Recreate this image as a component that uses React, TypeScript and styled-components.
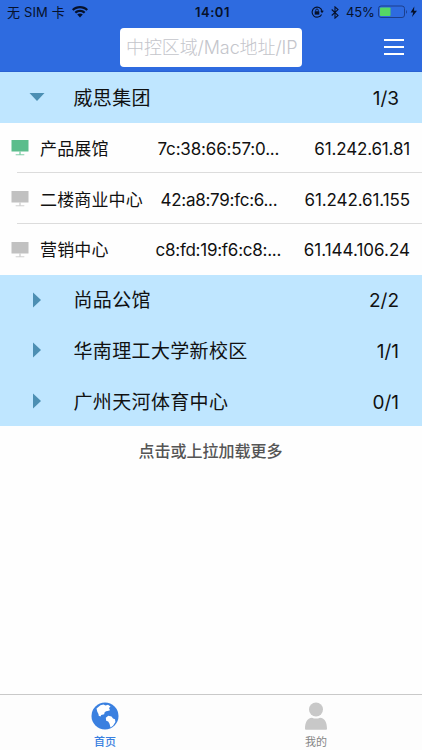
import React from "react";
import styled, { createGlobalStyle } from "styled-components";

const GlobalStyle = createGlobalStyle`
  * { box-sizing: border-box; }
  body {
    margin: 0;
    background: #fff;
    font-family: Inter, "Noto Sans CJK SC", sans-serif;
    color: #111;
  }
`;

const Screen = styled.div`
  width: 422px;
  height: 750px;
  display: flex;
  flex-direction: column;
  overflow: hidden;
  background: #fefefe;
`;

const Header = styled.header`
  height: 72px;
  flex: none;
  background: #2e6be0;
  border-bottom: 1px solid #2a62d2;
`;

const StatusBar = styled.div`
  height: 24px;
  display: grid;
  grid-template-columns: 195px 1fr 111px;
  align-items: center;
  color: #06112b;
  white-space: nowrap;
`;

const StatusGroup = styled.div`
  display: flex;
  align-items: center;
`;

const Carrier = styled.span`
  font-size: 13px;
  line-height: 22px;
  letter-spacing: 0.15px;
  margin: 0 7px 0 7px;
`;

const Clock = styled.span`
  font-size: 13px;
  font-weight: 600;
  letter-spacing: 0.5px;
`;

const StatusGap = styled.span`
  width: 7px;
`;

const Percent = styled.span`
  font-size: 13px;
  letter-spacing: -0.1px;
  margin: 0 3px 0 7px;
`;

const NavBar = styled.div`
  height: 48px;
  display: flex;
  align-items: flex-start;
  padding: 4px 18px 0 120px;
`;

const SearchField = styled.div`
  width: 182px;
  height: 39px;
  padding-left: 6px;
  border-radius: 4px;
  background: #fff;
  color: #c4c5cb;
  font-size: 18px;
  font-weight: 300;
  line-height: 40px;
  letter-spacing: -0.1px;
  white-space: nowrap;
  overflow: hidden;
`;

const MenuButton = styled.div`
  width: 20px;
  height: 16px;
  margin: 11px 0 0 auto;
  display: flex;
  flex-direction: column;
  justify-content: space-between;
`;

const MenuLine = styled.span`
  height: 2px;
  background: #fff;
`;

const GroupRow = styled.div`
  height: 50.64px;
  flex: none;
  display: grid;
  grid-template-columns: 73.5px 1fr auto;
  align-items: center;
  padding-right: 23px;
  background: #bfe6ff;
  font-size: 19px;
  line-height: 47px;
  white-space: nowrap;
`;

const GroupName = styled.span`
  padding-top: 2px;
  letter-spacing: 0.35px;
`;

const Count = styled.span`
  padding-top: 2px;
  letter-spacing: 0;
`;

const Arrow = styled.svg`
  justify-self: center;
  fill: #4c8fb3;
`;

const DeviceRow = styled.div`
  height: 50.64px;
  flex: none;
  display: grid;
  grid-template-columns: 40px 115.5px 1fr auto;
  align-items: center;
  padding-right: 12px;
  background: #fefefe;
  font-size: 17px;
  line-height: 48px;
  white-space: nowrap;
`;

const Divider = styled.div`
  height: 1px;
  margin: -1px 0 0 17px;
  flex: none;
  position: relative;
  background: #dcdcdc;
`;

const DeviceName = styled.span`
  padding-top: 2px;
  letter-spacing: 0.15px;
`;

const Mac = styled.span<{ $indent: number; $spacing: number }>`
  padding: 2px 0 0 ${(p) => p.$indent}px;
  letter-spacing: ${(p) => p.$spacing}px;
`;

const Ip = styled.span<{ $spacing: number }>`
  padding-top: 2px;
  letter-spacing: ${(p) => p.$spacing}px;
`;

const MonitorIcon = styled.svg`
  margin-left: 11px;
`;

const LoadMore = styled.div`
  padding: 12px 1px 0 0;
  text-align: center;
  color: #555;
  font-size: 16px;
  font-weight: 500;
  line-height: 26px;
`;

const TabBar = styled.nav`
  height: 56px;
  margin-top: auto;
  flex: none;
  display: grid;
  grid-template-columns: 1fr 1fr;
  border-top: 1px solid #c9c9c9;
  background: #fdfdfd;
`;

const Tab = styled.div<{ $active?: boolean }>`
  display: flex;
  flex-direction: column;
  align-items: center;
  padding: 7px 1px 0 0;
  color: ${(p) => (p.$active ? "#3a80e0" : "#858585")};
  font-size: 11px;
  font-weight: ${(p) => (p.$active ? 500 : 400)};
  line-height: 16px;
`;

const TabIcon = styled.svg`
  display: block;
  margin-bottom: 4px;
`;

const Wifi = () => (
  <svg width="16" height="12" viewBox="0 0 16 12" fill="#06112b">
    <path d="M8 0C4.900 0 2.100 1.200 0 3.200l1.500 1.600C3.200 3.200 5.500 2.200 8 2.200s4.800 1 6.500 2.600L16 3.200C13.900 1.200 11.100 0 8 0z" />
    <path d="M8 3.700c-2.100 0-4 .8-5.400 2.200l1.500 1.600C5.100 6.500 6.500 5.900 8 5.900s2.900.6 3.900 1.600l1.500-1.600C12 4.500 10.100 3.700 8 3.700z" />
    <path d="M8 7.400c-1.100 0-2.100.4-2.800 1.100L8 11.500l2.800-3C10.100 7.800 9.100 7.400 8 7.400z" />
  </svg>
);

const RotationLock = () => (
  <svg width="13" height="12" viewBox="0 0 13 12" fill="none" stroke="#06112b">
    <path d="M10.600 8.400A5 5 0 1 1 11 5" strokeWidth="1.100" />
    <path d="M9.300 4.800h3.500L11 7.200z" fill="#06112b" stroke="none" />
    <rect x="3.700" y="5.300" width="4.600" height="3.300" fill="#06112b" stroke="none" />
    <path d="M4.700 5.500V4.300a1.300 1.300 0 0 1 2.600 0v1.200" strokeWidth=".9" />
  </svg>
);

const Bluetooth = () => (
  <svg width="8" height="13" viewBox="0 0 8 13" fill="none" stroke="#06112b" strokeWidth="1.100">
    <path d="M.7 3.500 7 9.400 4 12.100V.9L7 3.600.7 9.500" />
  </svg>
);

const Battery = () => (
  <svg width="39" height="14" viewBox="0 0 39 14">
    <rect x=".5" y="1" width="26" height="11.500" rx="2.500" fill="none" stroke="#1c3f8c" />
    <path d="M28 5v3.800c1.300-.5 1.300-3.300 0-3.800z" fill="#1c3f8c" />
    <rect x="2" y="2.500" width="10.500" height="8.500" rx=".8" fill="#55d865" />
    <path d="M36.300 1.600 32.600 7.400h2.600L34 12.100l5-6.300h-3z" fill="#06112b" />
  </svg>
);

const Monitor = ({ online }: { online?: boolean }) => {
  const color = online ? "#5bbd8c" : "#c1c1c1";
  return (
    <MonitorIcon width="18" height="17" viewBox="0 0 18 17" fill={color}>
      <path d="M.5 1h17v11.500H.5z" />
      <path d="M8.300 12.500h1.400v2.700h3.600v1H4.700v-1h3.600z" opacity=".75" />
    </MonitorIcon>
  );
};

type Device = {
  name: string;
  mac: string;
  indent: number;
  macSpacing: number;
  ip: string;
  ipSpacing: number;
  online?: boolean;
};

const devices: Device[] = [
  { name: "产品展馆", mac: "7c:38:66:57:0...", indent: 2, macSpacing: -0.17, ip: "61.242.61.81", ipSpacing: -0.17, online: true },
  { name: "二楼商业中心", mac: "42:a8:79:fc:6...", indent: 5, macSpacing: -0.27, ip: "61.242.61.155", ipSpacing: -0.1 },
  { name: "营销中心", mac: "c8:fd:19:f6:c8:...", indent: 0, macSpacing: -0.25, ip: "61.144.106.24", ipSpacing: 0 },
];

const Group = ({ name, count, open }: { name: string; count: string; open?: boolean }) => (
  <GroupRow>
    {open ? (
      <Arrow width="16" height="8" viewBox="0 0 16 8">
        <path d="M.5 0h15L8 8z" />
      </Arrow>
    ) : (
      <Arrow width="8" height="16" viewBox="0 0 8 16">
        <path d="M0 .5v15L8 8z" />
      </Arrow>
    )}
    <GroupName>{name}</GroupName>
    <Count>{count}</Count>
  </GroupRow>
);

export default function App() {
  return (
    <>
      <GlobalStyle />
      <Screen>
        <Header>
          <StatusBar>
            <StatusGroup>
              <Carrier>无 SIM 卡</Carrier>
              <Wifi />
            </StatusGroup>
            <Clock>14:01</Clock>
            <StatusGroup>
              <RotationLock />
              <StatusGap />
              <Bluetooth />
              <Percent>45%</Percent>
              <Battery />
            </StatusGroup>
          </StatusBar>
          <NavBar>
            <SearchField>中控区域/Mac地址/IP</SearchField>
            <MenuButton>
              <MenuLine />
              <MenuLine />
              <MenuLine />
            </MenuButton>
          </NavBar>
        </Header>
        <Group name="威思集团" count="1/3" open />
        {devices.map((d, i) => (
          <React.Fragment key={d.name}>
            <DeviceRow>
              <Monitor online={d.online} />
              <DeviceName>{d.name}</DeviceName>
              <Mac $indent={d.indent} $spacing={d.macSpacing}>{d.mac}</Mac>
              <Ip $spacing={d.ipSpacing}>{d.ip}</Ip>
            </DeviceRow>
            {i < devices.length - 1 && <Divider />}
          </React.Fragment>
        ))}
        <Group name="尚品公馆" count="2/2" />
        <Group name="华南理工大学新校区" count="1/1" />
        <Group name="广州天河体育中心" count="0/1" />
        <LoadMore>点击或上拉加载更多</LoadMore>
        <TabBar>
          <Tab $active>
            <TabIcon width="28" height="28" viewBox="0 0 28 28">
              <circle cx="14" cy="14" r="13.500" fill="#3a80e0" />
              <path
                d="M5.500 6.500 9.500 3.200l3-.7 2 1 2.500-.7 2.500 1.700-1.500 1.500 1 2.200-2.300.8-1.700.2-1.500 1.300-.3 1.700-3 .9-.7 1.500-1.800-.8-.2-1.800-1.200-2.200z"
                fill="#fff"
              />
              <path
                d="m14.800 15.800 2.500-2 3.200.6 1.500 2 2 .8.400 2.800-2.400 3.800-2.500 1.800-1-3.800-1.300-2.300-2-.8z"
                fill="#fff"
              />
            </TabIcon>
            首页
          </Tab>
          <Tab>
            <TabIcon width="28" height="28" viewBox="0 0 28 28" fill="#c8c8c8">
              <circle cx="14" cy="7.500" r="7" />
              <path d="M3 27c0-6.500 2.200-11 7-11.300 2.500 1.200 5.500 1.200 8 0 4.800.3 7 4.800 7 11.300q0 .7-1 .7H4q-1 0-1-.7z" />
            </TabIcon>
            我的
          </Tab>
        </TabBar>
      </Screen>
    </>
  );
}
